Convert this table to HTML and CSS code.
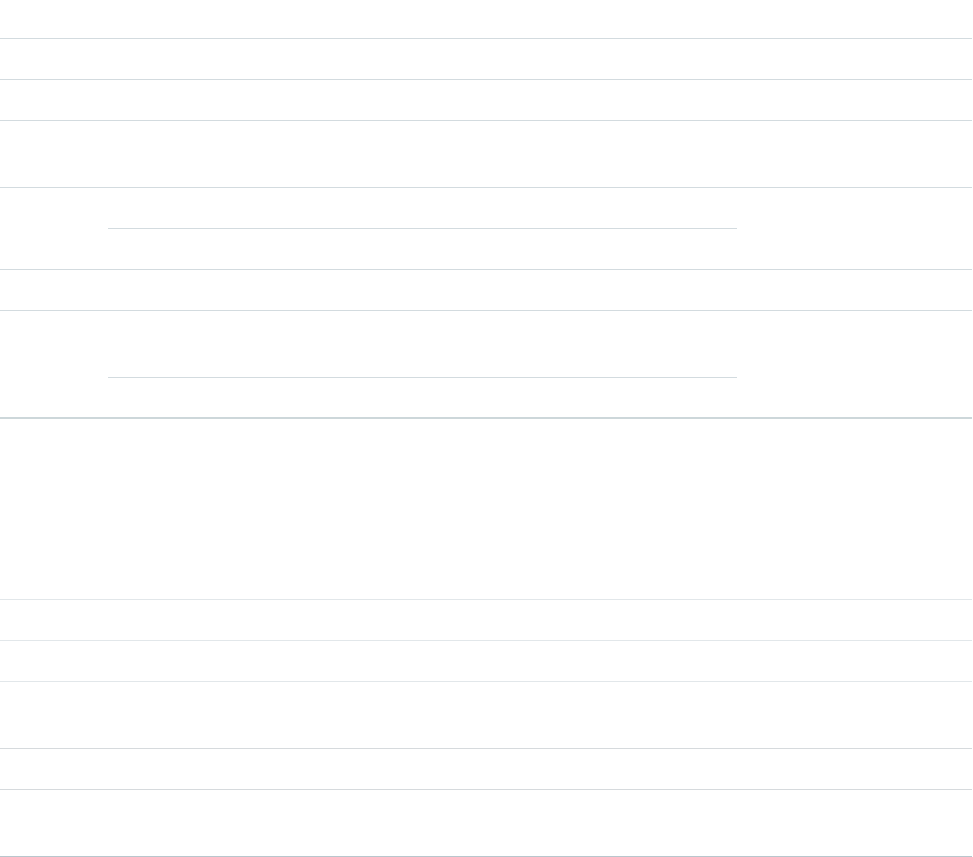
FILE: index.html
```html
<!DOCTYPE html>
<html lang="en">

<head>
    <meta charset="UTF-8">
    <meta name="viewport" content="width=device-width, initial-scale=1.0">
    <title>Form</title>
    <link rel="stylesheet" href="styles.css">
</head>

<body>
    <div class="sheet">
        <div class="section">
            <div class="row row-first"></div>
            <div class="row"></div>
            <div class="row"></div>
            <div class="row row-tall"></div>
            <div class="row group">
                <div class="sub-row"></div>
                <div class="sub-rest"></div>
            </div>
            <div class="row"></div>
            <div class="row group">
                <div class="sub-row sub-tall"></div>
                <div class="sub-rest sub-short"></div>
            </div>
        </div>

        <div class="section-end"></div>

        <div class="section lower">
            <div class="row"></div>
            <div class="row"></div>
            <div class="row row-tall gray"></div>
            <div class="row gray"></div>
            <div class="row row-tall last"></div>
        </div>
    </div>
</body>

</html>
```

FILE: styles.css
```css
body {
    margin: 0;
    font-family: "Liberation Sans", Arial, sans-serif;
    background-color: #fff;
}

.sheet {
    width: 972px;
}

.row {
    height: 40px;
    border-bottom: 1px solid #d3dbdf;
}

.row-first {
    height: 38px;
}

.row-tall {
    height: 66px;
}

.group {
    height: auto;
}

.sub-row {
    height: 40px;
    margin-left: 108px;
    width: 629px;
    border-bottom: 1px solid #d3dbdf;
}

.sub-tall {
    height: 66px;
}

.sub-rest {
    height: 40px;
}

.sub-short {
    height: 39px;
}

.group:last-child {
    border-bottom: none;
}

.section-end {
    height: 180px;
    border-top: 2px solid #cdd7da;
    border-bottom: 1px solid #e2e7ea;
}

.lower .row {
    border-bottom-color: #e2e7ea;
}

.lower .gray {
    border-bottom-color: #d6dadd;
}

.lower .last {
    border-bottom-color: #b9c6cd;
}
```
